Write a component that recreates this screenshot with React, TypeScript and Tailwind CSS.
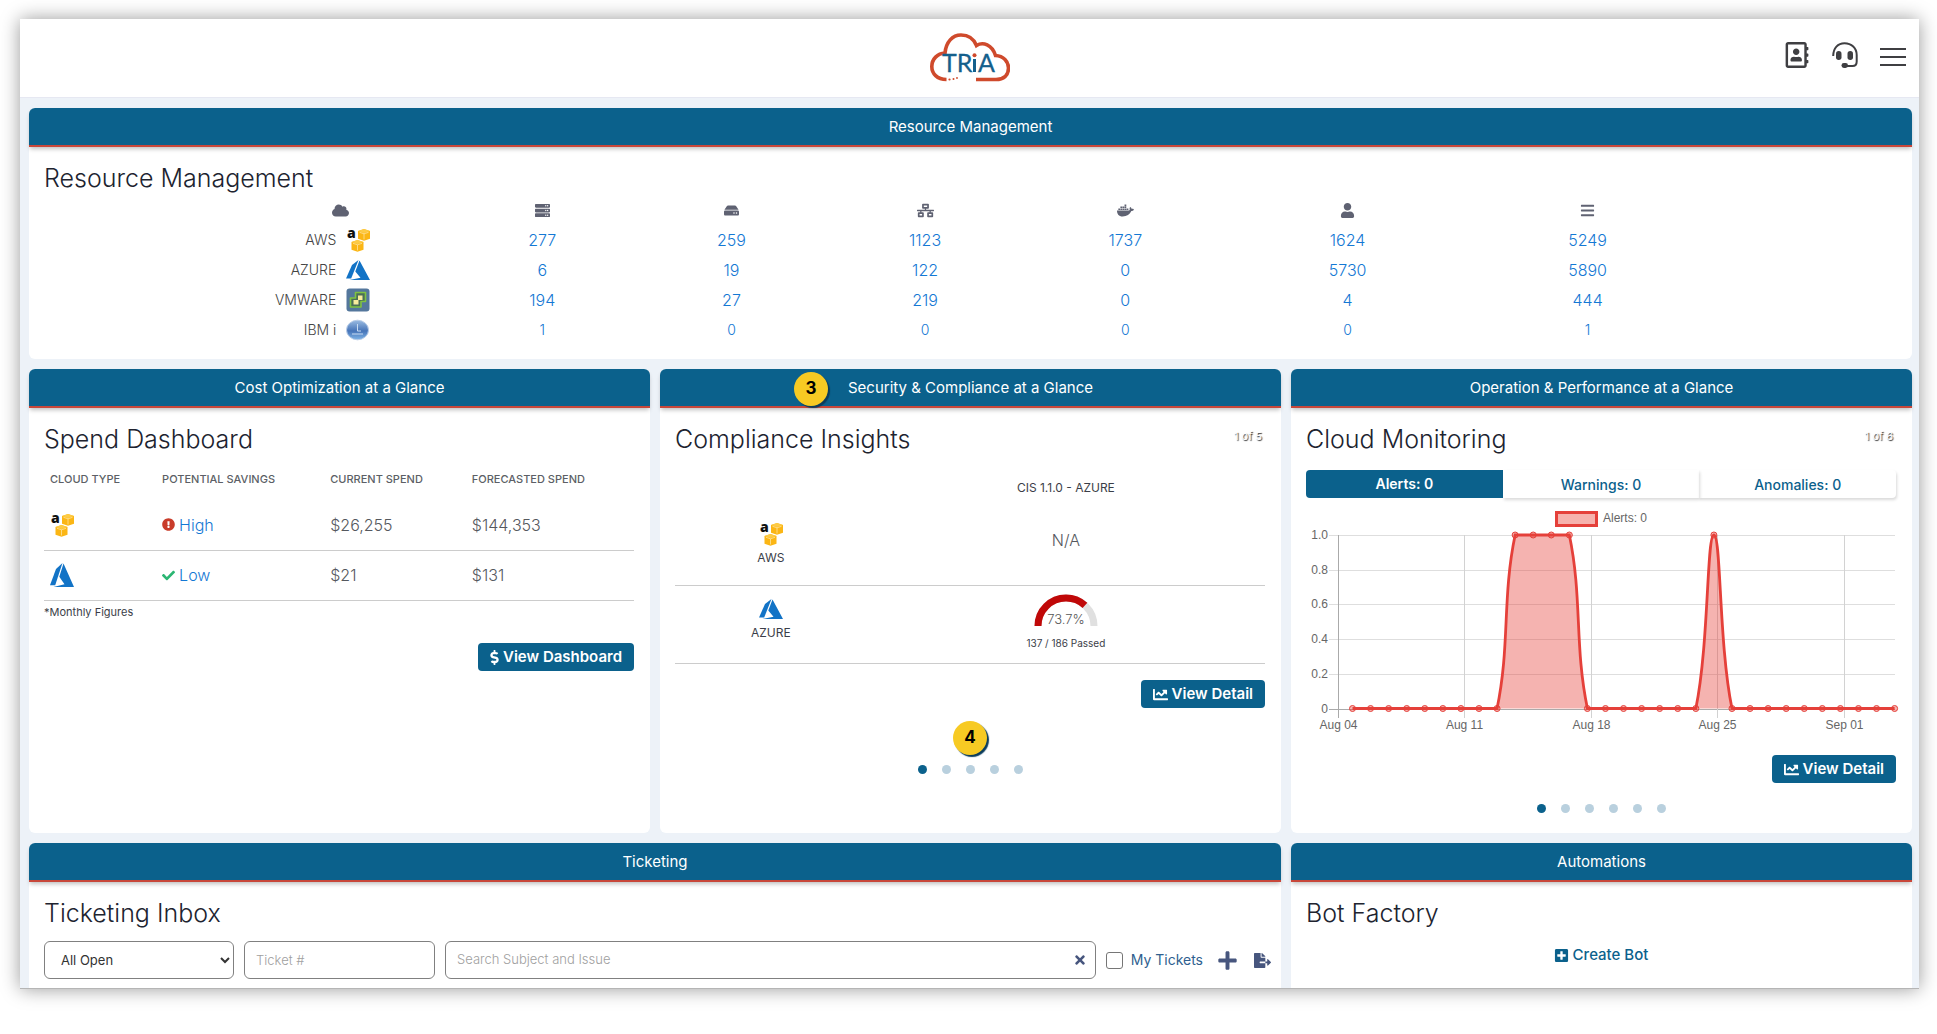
import type { ReactNode } from 'react';
import {
  FaCloud, FaServer, FaHdd, FaNetworkWired, FaDocker, FaUser, FaBars, FaExclamationCircle, FaCheck,
  FaDollarSign, FaChartLine, FaTimes, FaPlus, FaFileExport, FaPlusSquare, FaRegAddressBook,
} from 'react-icons/fa';

function Logo() {
  return (
    <svg viewBox="0 0 80 50" className="h-[50px] w-20" role="img" aria-label="TRiA">
      <path
        d="M16.500 46.500C7 46.500 1.800 40.500 1.800 33.500C1.800 26 7.500 20.500 15 20C16 9 22.500 2 31 2C38.500 2 44 6.500 46.500 12.500C53 8.500 62 11.500 65.500 22.500C73.500 23 78.500 28.500 78.500 35C78.500 42.500 73.500 46.500 66 46.500H46"
        fill="none" stroke="#cf4a2c" strokeWidth="3.600"
      />
      <g fill="#cf4a2c"><circle cx="19.500" cy="46.500" r="1.100" /><circle cx="23.500" cy="46" r="1" /><circle cx="27" cy="45" r=".9" /></g>
      <text x="12" y="39" fontFamily="Lato, sans-serif" fontSize="25" fill="#14608c" stroke="#14608c" strokeWidth=".3">TR</text>
      <rect x="43" y="26" width="3" height="13" fill="#14608c" />
      <circle cx="44.500" cy="22.300" r="2" fill="#cf4a2c" />
      <text x="48" y="39" fontFamily="Lato, sans-serif" fontSize="25" fill="#14608c" stroke="#14608c" strokeWidth=".3">A</text>
    </svg>
  );
}

function Headset() {
  return (
    <svg viewBox="0 0 26 26" className="size-[26px]" aria-hidden="true">
      <path d="M1.200 14C1.200 6 6 1.200 12.500 1.200C19.500 1.200 24.700 6 24.700 13V19.500C24.700 22.500 23 24 20.500 24H14" fill="none" stroke="#3f3f42" strokeWidth="2" />
      <rect x="4" y="9" width="5.500" height="9" rx="2.700" fill="#3f3f42" />
      <rect x="15.500" y="9" width="5.500" height="9" rx="2.700" fill="#3f3f42" />
      <rect x="9.500" y="21" width="6.500" height="5" rx="2.400" fill="#3f3f42" />
    </svg>
  );
}

function Cube({ x, y }: { x: number; y: number }) {
  return (
    <g transform={`translate(${x} ${y})`}>
      <path d="M6 0L12 2V9.800L6 11.800L0 9.800V2Z" fill="#fbb615" />
      <path d="M6 0L12 2L6 4L0 2Z" fill="#fdcb45" />
      <path d="M1.500 3.300L6 4.800L10.500 3.300M6 4.800V10.500" fill="none" stroke="#ffeab0" strokeWidth=".7" />
    </g>
  );
}

function AwsIcon() {
  return (
    <svg viewBox="0 0 24 24" className="size-6 shrink-0 overflow-visible" aria-hidden="true">
      <text x="1" y="10" fontFamily="Open Sans, sans-serif" fontSize="14" fontWeight="800" fill="#111">a</text>
      <Cube x={12} y={1} />
      <Cube x={5.5} y={12} />
    </svg>
  );
}

function AzureIcon({ tall = false }: { tall?: boolean }) {
  return (
    <svg viewBox="0 0 24 20" preserveAspectRatio="none" className={tall ? 'h-6 w-6 shrink-0' : 'h-5 w-6 shrink-0'} aria-hidden="true">
      <path d="M12.500 0L6 5L0 18.500H5.200Z" fill="#1273c6" />
      <path d="M13.500 .5L24 20H3.500L14.500 17.800L9.300 11.500Z" fill="#1273c6" />
    </svg>
  );
}

function VmwareIcon() {
  return (
    <svg viewBox="0 0 24 24" className="size-6 shrink-0" aria-hidden="true">
      <rect x=".5" y=".5" width="23" height="23" rx="3" fill="#54779c" />
      <path d="M9.500 4.500H19.500V13.500H15V19H4.500V10H9.500Z" fill="#4b6f57" stroke="#7fc241" strokeWidth="1.600" strokeLinejoin="round" />
      <path d="M12 7.500H16.500V12H12.500V16.500H7.500V12H12Z" fill="#f8ec9c" />
    </svg>
  );
}

function IbmIcon() {
  return (
    <svg viewBox="0 0 24 24" className="size-6 shrink-0" aria-hidden="true">
      <defs>
        <linearGradient id="ibm" x1="0" y1="0" x2="0" y2="1">
          <stop offset="0" stopColor="#9bbce2" />
          <stop offset=".55" stopColor="#4674b8" />
          <stop offset="1" stopColor="#7fb4e6" />
        </linearGradient>
      </defs>
      <ellipse cx="11.500" cy="12" rx="11" ry="9.800" fill="url(#ibm)" stroke="#b9cde8" />
      <path d="M11.500 6V13H15M6 16H17" fill="none" stroke="#c9dcf2" strokeWidth="1" />
    </svg>
  );
}

function Badge({ children }: { children: ReactNode }) {
  return (
    <span className="flex size-[34px] items-center justify-center rounded-full bg-[#f7ca23] text-[17px] font-bold text-black shadow-[2px_2px_1px_#0b3c5c]">
      {children}
    </span>
  );
}

function Card({ heading, title, counter, badge, className = '', children }: {
  heading: string; title: string; counter?: string; badge?: string; className?: string; children: ReactNode;
}) {
  return (
    <section className={`flex flex-col rounded-md bg-white ${className}`}>
      <header className="flex h-[39px] items-center justify-center rounded-t-md border-b-2 border-[#c8473a] bg-[#0b618c] pt-[2px] text-[15px] text-white shadow-[0_3px_4px_-1px_rgba(0,0,0,0.25)]">
        <span className="relative">
          {heading}
          {badge && <span className="absolute right-full bottom-1/2 mr-5 translate-y-1/2"><Badge>{badge}</Badge></span>}
        </span>
      </header>
      <div className="flex-1 pt-4 pr-4 pl-[15px]">
        <div className="flex h-[30px] items-start justify-between leading-[30px]">
          <h2 className="text-[25px] font-light text-[#20232f]">{title}</h2>
          {counter && <span className="pr-[3px] text-[11px] leading-6 text-white [text-shadow:1px_1px_1px_#333]">{counter}</span>}
        </div>
        {children}
      </div>
    </section>
  );
}

function ActionButton({ icon, children }: { icon: ReactNode; children: ReactNode }) {
  return (
    <button type="button" className="flex h-7 items-center gap-1 rounded bg-[#0b618c] px-3 pt-px text-[15px] font-semibold text-white">
      {icon}
      {children}
    </button>
  );
}

function Dots({ count, badge }: { count: number; badge?: string }) {
  return (
    <div className="relative flex justify-center gap-[15px]">
      {badge && <span className="absolute bottom-full left-1/2 mb-[10px] -translate-x-1/2"><Badge>{badge}</Badge></span>}
      {Array.from({ length: count }, (_, i) => (
        <button
          key={i}
          type="button"
          aria-label={`Slide ${i + 1}`}
          className={i === 0 ? 'size-[9px] rounded-full bg-[#0b618c]' : 'size-[9px] rounded-full bg-[#b9d0de]'}
        />
      ))}
    </div>
  );
}

const resourceColumns = [
  { label: 'Servers', icon: <FaServer /> },
  { label: 'Storage', icon: <FaHdd /> },
  { label: 'Networks', icon: <FaNetworkWired className="text-[17px]" /> },
  { label: 'Containers', icon: <FaDocker className="text-[17px]" /> },
  { label: 'Users', icon: <FaUser /> },
  { label: 'Other', icon: <FaBars /> },
];

const resources = [
  { name: 'AWS', icon: <AwsIcon />, values: [277, 259, 1123, 1737, 1624, 5249] },
  { name: 'AZURE', icon: <AzureIcon />, values: [6, 19, 122, 0, 5730, 5890] },
  { name: 'VMWARE', icon: <VmwareIcon />, values: [194, 27, 219, 0, 4, 444] },
  { name: 'IBM i', icon: <IbmIcon />, values: [1, 0, 0, 0, 0, 1], small: true },
];

function ResourceTable() {
  return (
    <table className="mx-auto mt-[2px] mb-[14px] w-[79.5%] table-fixed">
      <colgroup>
        <col className="w-[14.5%]" /><col className="w-[12.9%]" /><col className="w-[12.8%]" /><col className="w-[13.5%]" />
        <col className="w-[13.7%]" /><col className="w-[16.5%]" /><col className="w-[16.1%]" />
      </colgroup>
      <thead>
        <tr className="h-[30px] text-[15px] text-[#5f6272]">
          <th aria-label="Cloud"><FaCloud className="mx-auto text-[17px]" /></th>
          {resourceColumns.map((c) => (
            <th key={c.label} aria-label={c.label}><span className="flex justify-center">{c.icon}</span></th>
          ))}
        </tr>
      </thead>
      <tbody>
        {resources.map((r) => (
          <tr key={r.name} className="h-[30px]">
            <th className="p-0 pr-[77px] font-light">
              <span className="flex items-center justify-end gap-[10px] text-sm text-[#444]">{r.name}{r.icon}</span>
            </th>
            {r.values.map((v, i) => (
              <td key={i} className={r.small ? 'p-0 text-center text-sm font-light' : 'p-0 text-center text-base font-light'}>
                <a href="#" className="text-[#1478d4]">{v}</a>
              </td>
            ))}
          </tr>
        ))}
      </tbody>
    </table>
  );
}

function SpendTable() {
  return (
    <table className="mt-1 w-full table-fixed text-left">
      <colgroup><col className="w-[19%]" /><col className="w-[28.5%]" /><col className="w-[24%]" /><col /></colgroup>
      <thead>
        <tr className="h-[42px] text-[11px] text-[#5c5f66]">
          {['CLOUD TYPE', 'POTENTIAL SAVINGS', 'CURRENT SPEND', 'FORECASTED SPEND'].map((h) => (
            <th key={h} className="px-[6px] font-medium">{h}</th>
          ))}
        </tr>
      </thead>
      <tbody className="text-base font-light text-[#55585e]">
        <tr className="h-[50px] border-b border-[#ccc]">
          <td className="px-[6px]"><AwsIcon /></td>
          <td className="px-[6px]"><a href="#" className="flex items-center gap-1 text-[#1478d4]"><FaExclamationCircle className="text-[13px] text-[#c93c2a]" />High</a></td>
          <td className="px-[6px]">$26,255</td>
          <td className="px-[6px]">$144,353</td>
        </tr>
        <tr className="h-[50px] border-b border-[#ccc]">
          <td className="px-[6px]"><AzureIcon tall /></td>
          <td className="px-[6px]"><a href="#" className="flex items-center gap-1 text-[#1478d4]"><FaCheck className="text-[13px] text-[#2bb673]" />Low</a></td>
          <td className="px-[6px]">$21</td>
          <td className="px-[6px]">$131</td>
        </tr>
      </tbody>
    </table>
  );
}

function Gauge() {
  return (
    <svg viewBox="0 0 64 34" className="h-[34px] w-16" role="img" aria-label="73.7%">
      <path d="M4 33A28 28 0 0 1 60 33" fill="none" stroke="#e0e0e0" strokeWidth="7" />
      <path d="M4 33A28 28 0 0 1 60 33" fill="none" stroke="#c00808" strokeWidth="7" pathLength="100" strokeDasharray="73.700 100" />
      <text x="32" y="31" textAnchor="middle" fontFamily="Inter, sans-serif" fontSize="13" fontWeight="300" fill="#555">73.7%</text>
    </svg>
  );
}

function ComplianceTable() {
  return (
    <table className="mt-[14px] w-full table-fixed text-center text-[#3b3e48]">
      <colgroup><col className="w-[32.5%]" /><col /></colgroup>
      <thead>
        <tr className="h-[39px]">
          <td />
          <th className="p-0 text-xs font-normal">CIS 1.1.0 - AZURE</th>
        </tr>
      </thead>
      <tbody>
        <tr className="h-[78px] border-b border-[#ccc]">
          <th className="p-0 pb-[3px] text-xs font-normal"><span className="flex flex-col items-center gap-1"><AwsIcon />AWS</span></th>
          <td className="p-0 pb-3 text-base font-light text-[#55585e]">N/A</td>
        </tr>
        <tr className="h-[78px] border-b border-[#ccc]">
          <th className="p-0 pb-2 text-xs font-normal"><span className="flex flex-col items-center gap-[6px]"><AzureIcon />AZURE</span></th>
          <td className="p-0 pb-1">
            <span className="flex flex-col items-center gap-2 text-[10px] leading-4"><Gauge />137 / 186 Passed</span>
          </td>
        </tr>
      </tbody>
    </table>
  );
}

const alerts = [0, 0, 0, 0, 0, 0, 0, 0, 0, 1, 1, 1, 1, 0, 0, 0, 0, 0, 0, 0, 1, 0, 0, 0, 0, 0, 0, 0, 0, 0, 0];
const TOP = 37;
const BASE = 210.5;
const points = alerts.map((v, i) => ({ x: 46.5 + i * 18.07, y: v ? TOP : BASE }));

const clampY = (y: number) => Math.min(BASE, Math.max(TOP, y));

// Control points of a cardinal spline with tension 0.4, kept inside the plot area.
const controls = points.map((p, i) => {
  const a = points[Math.max(0, i - 1)];
  const b = points[Math.min(points.length - 1, i + 1)];
  const before = Math.hypot(p.x - a.x, p.y - a.y);
  const after = Math.hypot(b.x - p.x, b.y - p.y);
  const fa = (0.4 * before) / (before + after);
  const fb = (0.4 * after) / (before + after);
  return {
    inX: p.x - fa * (b.x - a.x), inY: clampY(p.y - fa * (b.y - a.y)),
    outX: p.x + fb * (b.x - a.x), outY: clampY(p.y + fb * (b.y - a.y)),
  };
});

const linePath = points
  .map((p, i) => (i === 0
    ? `M${p.x} ${p.y}`
    : `C${controls[i - 1].outX} ${controls[i - 1].outY} ${controls[i].inX} ${controls[i].inY} ${p.x} ${p.y}`))
  .join('');

function AlertsChart() {
  return (
    <svg viewBox="0 0 590 240" className="w-full overflow-visible" role="img" aria-label="Alerts by day" fontFamily="Liberation Sans, sans-serif" fontSize="12" fill="#666">
      <rect x="250.500" y="14.500" width="40" height="13" fill="#f6b2ad" stroke="#e5403a" strokeWidth="3" />
      <text x="297" y="24">Alerts: 0</text>
      {['1.0', '0.8', '0.6', '0.4', '0.2', '0'].map((t, i) => {
        const y = Math.round(TOP + i * 34.7) + 0.5;
        return (
          <g key={t}>
            <path d={`M23 ${y}H589`} stroke={t === '0' ? '#aaa' : '#dedede'} />
            <text x="22" y={y + 3} textAnchor="end">{t}</text>
          </g>
        );
      })}
      {['Aug 04', 'Aug 11', 'Aug 18', 'Aug 25', 'Sep 01'].map((t, i) => {
        const x = Math.round(32 + i * 126.4) + 0.5;
        return (
          <g key={t}>
            <path d={`M${x} ${TOP}V220`} stroke={i === 0 ? '#aaa' : '#d2d2d2'} />
            <text x={x} y="231" textAnchor="middle">{t}</text>
          </g>
        );
      })}
      <path d={`${linePath}V${BASE}H${points[0].x}Z`} fill="#e5403a" fillOpacity=".4" />
      <path d={linePath} fill="none" stroke="#e5403a" strokeWidth="2.800" />
      {points.map((p) => <circle key={p.x} cx={p.x} cy={p.y} r="3" fill="#e5403a" fillOpacity=".4" stroke="#e5403a" />)}
    </svg>
  );
}

export default function App() {
  return (
    <div className="bg-white pt-[19px] pr-[18px] pb-[46px] pl-5 font-['Inter','Liberation_Sans',sans-serif]">
      <div className="border-b border-[#b5b5b5] bg-[#edf2f8] shadow-[0_0_18px_rgba(0,0,0,0.4)]">
        <header className="grid h-[79px] grid-cols-[1fr_auto_1fr] items-center border-b border-[#e6e8f2] bg-white text-[#3f3f42]">
          <span />
          <Logo />
          <nav className="flex items-center justify-end gap-[22px] pr-[13px] pb-[6px]">
            <button type="button" aria-label="Contacts"><FaRegAddressBook className="size-[26px]" /></button>
            <button type="button" aria-label="Support"><Headset /></button>
            <button type="button" aria-label="Menu" className="flex w-[26px] flex-col gap-[6px] pt-1">
              <span className="h-[2px] bg-current" /><span className="h-[2px] bg-current" /><span className="h-[2px] bg-current" />
            </button>
          </nav>
        </header>

        <main className="grid grid-cols-3 gap-[10px] pt-[10px] pr-[7px] pl-[9px]">
          <Card heading="Resource Management" title="Resource Management" className="col-span-3">
            <ResourceTable />
          </Card>

          <Card heading="Cost Optimization at a Glance" title="Spend Dashboard">
            <SpendTable />
            <p className="text-[11px] leading-[22px] text-[#3b3e48]">*Monthly Figures</p>
            <div className="mt-5 flex justify-end">
              <ActionButton icon={<FaDollarSign className="-mx-[3px]" />}>View Dashboard</ActionButton>
            </div>
          </Card>

          <Card heading="Security & Compliance at a Glance" title="Compliance Insights" counter="1 of 5" badge="3">
            <ComplianceTable />
            <div className="mt-4 mb-[57px] flex justify-end">
              <ActionButton icon={<FaChartLine />}>View Detail</ActionButton>
            </div>
            <Dots count={5} badge="4" />
          </Card>

          <Card heading="Operation & Performance at a Glance" title="Cloud Monitoring" counter="1 of 6">
            <div className="mt-4 grid grid-cols-3 text-sm font-medium text-[#0b618c]">
              <button type="button" className="h-7 rounded-l bg-[#0b618c] font-semibold text-white">Alerts: 0</button>
              <button type="button" className="h-7 pt-[2px] shadow-[1px_2px_3px_rgba(0,0,0,0.15)]">Warnings: 0</button>
              <button type="button" className="h-7 rounded-r pt-[2px] shadow-[1px_2px_3px_rgba(0,0,0,0.15)]">Anomalies: 0</button>
            </div>
            <AlertsChart />
            <div className="mt-[17px] mb-[21px] flex justify-end">
              <ActionButton icon={<FaChartLine />}>View Detail</ActionButton>
            </div>
            <div className="pb-5"><Dots count={6} /></div>
          </Card>

          <Card heading="Ticketing" title="Ticketing Inbox" className="col-span-2 rounded-b-none">
            <form className="mt-[13px] -mr-[6px] flex items-center gap-[10px] pb-[9px] text-[13px] text-[#333]">
              <select aria-label="Status" className="h-[38px] w-[190px] rounded-md border border-[#808080] bg-white px-3">
                <option>All Open</option>
              </select>
              <input aria-label="Ticket number" placeholder="Ticket #" className="h-[38px] w-[191px] rounded-md border border-[#808080] px-[11px] font-light placeholder:text-[#a0a0a0]" />
              <div className="flex h-[38px] flex-1 items-center rounded-md border border-[#808080] pr-2">
                <input aria-label="Search Subject and Issue" placeholder="Search Subject and Issue" className="min-w-0 flex-1 px-[11px] font-light placeholder:text-[#a0a0a0]" />
                <button type="button" aria-label="Clear search"><FaTimes className="size-[14px] text-[#47567e]" /></button>
              </div>
              <label className="flex items-center gap-2 text-sm text-[#2f5f8f]">
                <input type="checkbox" className="size-[17px] appearance-none rounded-[3px] border border-[#767676] bg-white" />
                My Tickets
              </label>
              <button type="button" aria-label="New ticket" className="ml-1 text-[#47567e]"><FaPlus className="size-[21px]" /></button>
              <button type="button" aria-label="Export" className="ml-[6px] text-[#47567e]"><FaFileExport className="size-[17px]" /></button>
            </form>
          </Card>

          <Card heading="Automations" title="Bot Factory" className="rounded-b-none">
            <button type="button" className="mx-auto mt-[17px] flex items-center gap-1 text-[15px] leading-5 font-medium text-[#0b618c]">
              <FaPlusSquare className="size-[15px]" />Create Bot
            </button>
          </Card>
        </main>
      </div>
    </div>
  );
}
